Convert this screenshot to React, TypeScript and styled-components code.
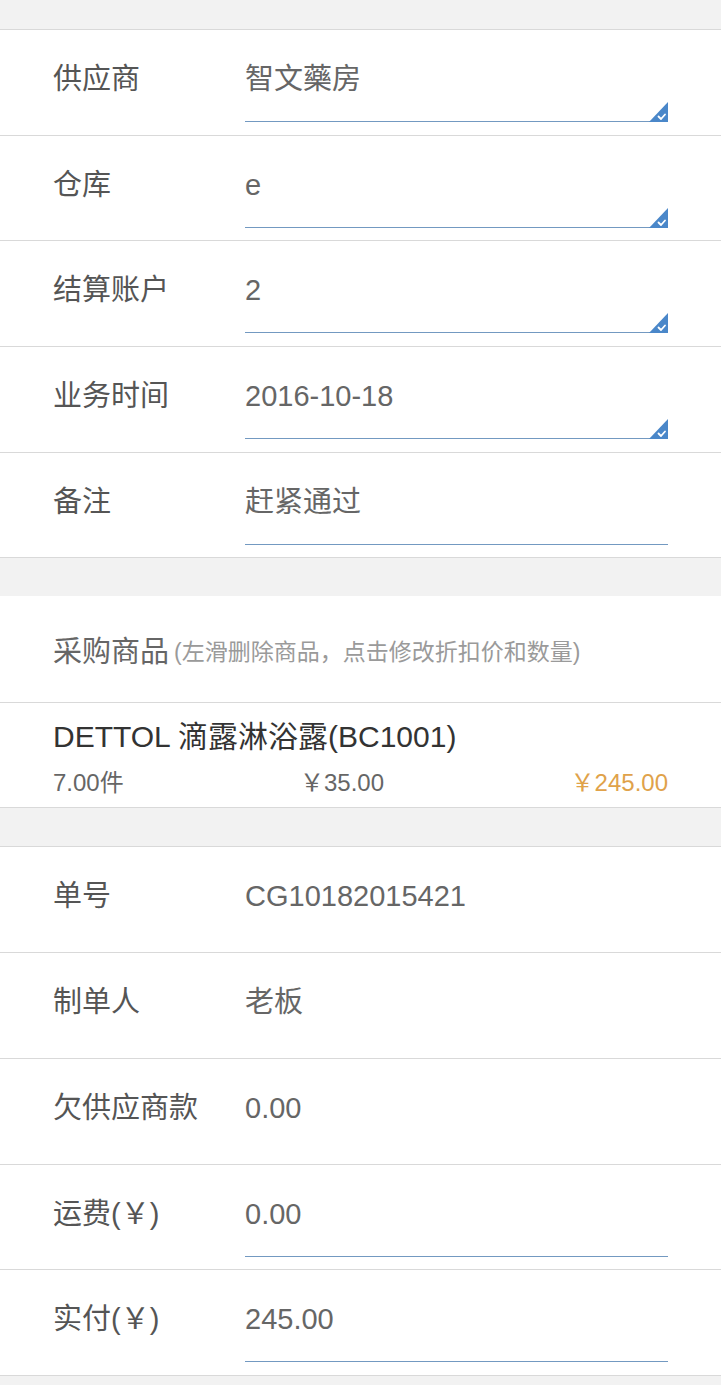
import React from "react";
import styled, { createGlobalStyle } from "styled-components";

const Global = createGlobalStyle`
  html, body { margin: 0; padding: 0; background: #f2f2f2; }
  body { font-family: "Liberation Sans", "Noto Sans CJK SC", sans-serif; }
`;

const Page = styled.div`
  width: 721px;
  background: #f2f2f2;
  padding: 29px 0 10px;
  display: flex;
  flex-direction: column;
  gap: 38px;
`;

const Section = styled.section<{ $noTop?: boolean }>`
  background: #fff;
  border-top: ${(p) => (p.$noTop ? "none" : "1px solid #d9d9d9")};
  display: flex;
  flex-direction: column;
`;

const Row = styled.div<{ $h?: number }>`
  box-sizing: border-box;
  height: ${(p) => p.$h ?? 105.7}px;
  border-bottom: 1px solid #d9d9d9;
  padding: 0 53px;
  display: flex;
  align-items: flex-start;
`;

const Label = styled.div`
  width: 192px;
  flex: none;
  padding-top: 29px;
  line-height: 40px;
  font-size: 29px;
  color: #555;
  white-space: nowrap;
`;

const Field = styled.div<{ $line?: boolean }>`
  position: relative;
  flex: 1;
  box-sizing: border-box;
  height: 92px;
  padding-top: 29px;
  line-height: 40px;
  font-size: 29px;
  color: #666;
  border-bottom: ${(p) => (p.$line ? "1px solid #7399c1" : "1px solid transparent")};
`;

const Corner = styled.svg`
  position: absolute;
  right: 0;
  bottom: -1px;
  width: 19px;
  height: 20px;
`;

const HeaderRow = styled.div`
  box-sizing: border-box;
  height: 107px;
  border-bottom: 1px solid #d9d9d9;
  padding: 0 53px;
  display: flex;
  align-items: center;
  gap: 5px;
  white-space: nowrap;
`;

const HeaderTitle = styled.span`
  font-size: 29px;
  color: #666;
`;

const HeaderHint = styled.span`
  font-size: 23px;
  color: #9a9a9a;
  position: relative;
  top: 1px;
`;

const ProductRow = styled.div`
  box-sizing: border-box;
  height: 105px;
  border-bottom: 1px solid #d9d9d9;
  padding: 14px 53px 0;
  display: flex;
  flex-direction: column;
`;

const ProductName = styled.div`
  font-size: 30px;
  line-height: 40px;
  color: #333;
  white-space: nowrap;
`;

const ProductMeta = styled.div`
  margin-top: 10px;
  display: grid;
  grid-template-columns: 247px 1fr auto;
  font-size: 24px;
  line-height: 32px;
  color: #666;
`;

const Amount = styled.span`
  color: #e0a24a;
`;

const Check = () => (
  <Corner viewBox="0 0 19 20">
    <path d="M19 0 L19 20 L0 20 Z" fill="#4a87c9" />
    <path d="M9.5 14.5 L12 17 L16 12.5" stroke="#fff" strokeWidth="1.8" fill="none" strokeLinecap="round" strokeLinejoin="round" />
  </Corner>
);

type Item = { label: string; value: string; line?: boolean; check?: boolean };

const top: Item[] = [
  { label: "供应商", value: "智文藥房", line: true, check: true },
  { label: "仓库", value: "e", line: true, check: true },
  { label: "结算账户", value: "2", line: true, check: true },
  { label: "业务时间", value: "2016-10-18", line: true, check: true },
  { label: "备注", value: "赶紧通过", line: true },
];

const bottom: Item[] = [
  { label: "单号", value: "CG10182015421" },
  { label: "制单人", value: "老板" },
  { label: "欠供应商款", value: "0.00" },
  { label: "运费(￥)", value: "0.00", line: true },
  { label: "实付(￥)", value: "245.00", line: true },
];

const renderRows = (items: Item[]) =>
  items.map((it) => (
    <Row key={it.label}>
      <Label>{it.label}</Label>
      <Field $line={it.line}>
        {it.value}
        {it.check && <Check />}
      </Field>
    </Row>
  ));

export default function App() {
  return (
    <>
      <Global />
      <Page>
        <Section>{renderRows(top)}</Section>
        <Section $noTop>
          <HeaderRow>
            <HeaderTitle>采购商品</HeaderTitle>
            <HeaderHint>(左滑删除商品，点击修改折扣价和数量)</HeaderHint>
          </HeaderRow>
          <ProductRow>
            <ProductName>DETTOL 滴露淋浴露(BC1001)</ProductName>
            <ProductMeta>
              <span>7.00件</span>
              <span>￥35.00</span>
              <Amount>￥245.00</Amount>
            </ProductMeta>
          </ProductRow>
        </Section>
        <Section>{renderRows(bottom)}</Section>
      </Page>
    </>
  );
}
